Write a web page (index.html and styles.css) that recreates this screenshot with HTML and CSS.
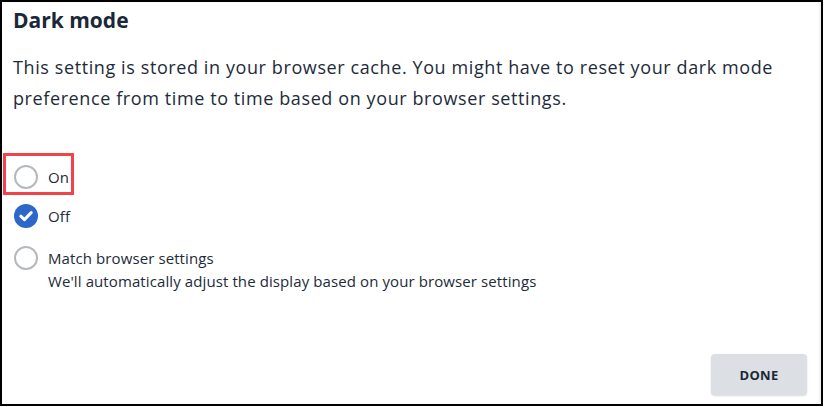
FILE: index.html
```html
<!DOCTYPE html>
<html>
<head>
<meta charset="utf-8">
<link rel="stylesheet" href="styles.css">
</head>
<body>
<div class="frame">
  <h1 class="title">Dark mode</h1>
  <p class="desc">This setting is stored in your browser cache. You might have to reset your dark mode preference from time to time based on your browser settings.</p>
  <div class="options">
    <div class="option highlighted">
      <span class="radio"></span>
      <span class="label">On</span>
    </div>
    <div class="option">
      <span class="radio checked">
        <svg width="24" height="24" viewBox="0 0 24 24"><circle cx="12" cy="12" r="12" fill="#2c67c9"/><path d="M6.8 12.2 L10.4 15.6 L17.2 8.6" fill="none" stroke="#fff" stroke-width="3" stroke-linecap="round" stroke-linejoin="round"/></svg>
      </span>
      <span class="label">Off</span>
    </div>
    <div class="option top">
      <span class="radio"></span>
      <div class="texts">
        <span class="label big">Match browser settings</span>
        <span class="sub">We'll automatically adjust the display based on your browser settings</span>
      </div>
    </div>
  </div>
  <div class="footer">
    <button class="done">DONE</button>
  </div>
</div>
</body>
</html>
```
FILE: styles.css
```css
html, body {
  margin: 0;
  padding: 0;
  background: #fff;
}
body {
  width: 824px;
  height: 407px;
  font-family: "Open Sans", Lato, sans-serif;
  color: #1d2b3a;
}
.frame {
  box-sizing: border-box;
  width: 823px;
  height: 406px;
  border: 2px solid #000;
  padding: 0 0 0 11px;
  display: flex;
  flex-direction: column;
  box-shadow: inset -2px 0 2px rgba(0,0,0,0.06);
}
.title {
  margin: 5px 0 0 0;
  font-size: 21px;
  font-weight: 700;
  line-height: 26px;
  color: #1a2838;
}
.desc {
  margin: 19px 0 0 0;
  font-size: 18px;
  line-height: 31px;
  letter-spacing: 0.6px;
  width: 790px;
}
.options {
  margin-top: 51px;
  display: flex;
  flex-direction: column;
  gap: 15px;
}
.option {
  display: flex;
  align-items: center;
  gap: 10px;
  font-size: 15px;
  letter-spacing: 0.1px;
}
.option.top {
  align-items: flex-start;
  margin-top: 3px;
}
.highlighted {
  align-self: flex-start;
  outline: 3px solid #f2434b;
  padding: 9px 2px 3px 7px;
  margin: -9px 0 -3px -7px;
}
.radio {
  box-sizing: border-box;
  width: 24px;
  height: 24px;
  border-radius: 50%;
  border: 2px solid #b5b9bd;
  flex-shrink: 0;
  margin-left: 1px;
}
.radio.checked {
  border: none;
  display: flex;
}
.label {
  line-height: 20px;
}
.label.big {
  line-height: 24px;
}
.texts {
  display: flex;
  flex-direction: column;
}
.sub {
  font-size: 15px;
  line-height: 22px;
}
.footer {
  margin-top: auto;
  display: flex;
  justify-content: flex-end;
  padding: 0 14px 9px 0;
}
.done {
  width: 96px;
  height: 41px;
  border: none;
  border-radius: 4px;
  background: #dcdfe3;
  box-shadow: 0 1px 2px rgba(0,0,0,0.15);
  font-family: "Open Sans", Lato, sans-serif;
  font-weight: 700;
  font-size: 13px;
  color: #1a2838;
  letter-spacing: 0.3px;
}
```
